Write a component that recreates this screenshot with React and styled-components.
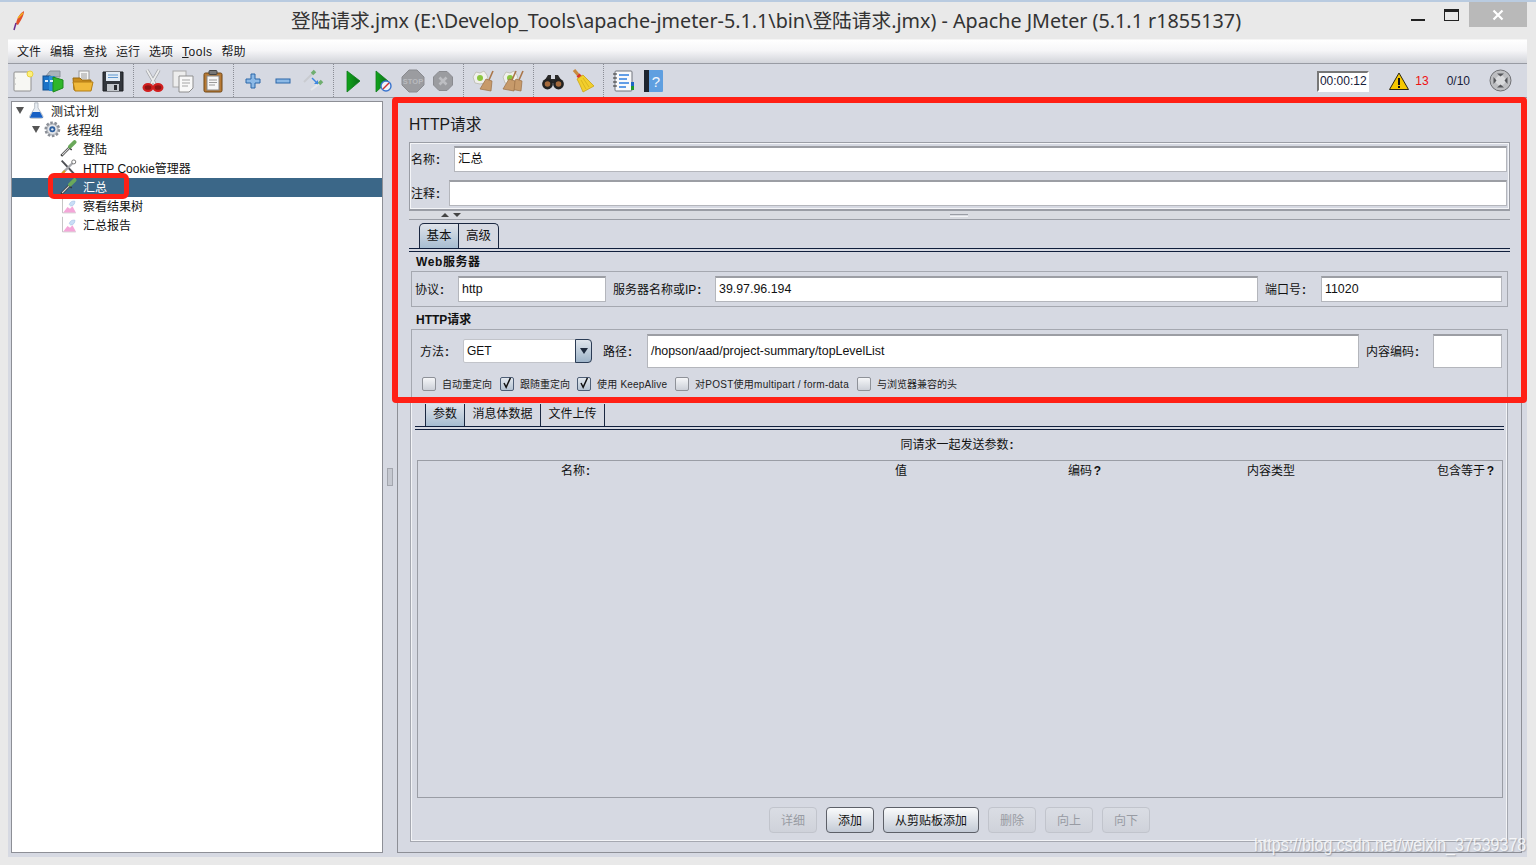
import React from "react";
import styled, { createGlobalStyle } from "styled-components";

const FONT = `"Liberation Sans", "Noto Sans CJK SC", sans-serif`;

const Global = createGlobalStyle`
  html, body { margin: 0; padding: 0; background: #e9e9e9; }
  body { font-family: ${FONT}; font-size: 12px; color: #111; overflow: hidden; }
  * { box-sizing: border-box; }
`;

const Window = styled.div`
  position: relative; width: 1536px; height: 865px; display: flex; flex-direction: column;
  background: #e9e9e9; border-top: 2px solid #b9cbe0; overflow: hidden;
`;
const TitleBar = styled.div`
  height: 37px; flex: none; display: flex; align-items: flex-start;
`;
const AppLogo = styled.div`
  width: 48px; padding: 8px 0 0 12px; flex: none;
`;
const TitleText = styled.div`
  flex: 1; text-align: center; font: 19.73px "Noto Sans", "Noto Sans CJK SC", sans-serif; color: #333;
  line-height: 37px; white-space: nowrap; padding-left: 82px;
`;
const WinControls = styled.div`
  width: 125px; flex: none; height: 25px; display: flex; align-items: flex-start; justify-content: flex-end; margin-right: 9px;
`;
const MinBtn = styled.div`
  width: 14px; height: 2px; background: #222; margin: 17px 19px 0 0;
`;
const MaxBtn = styled.div`
  width: 15px; height: 12px; border: 1px solid #222; border-top-width: 3px; margin: 7px 10px 0 0;
`;
const CloseBtn = styled.div`
  width: 58px; height: 25px; background: #b9b9b9; display: flex; align-items: center; justify-content: center;
`;

const Frame = styled.div`
  flex: none; height: 818px; margin: 0 9px 0 8px; display: flex; flex-direction: column;
`;
const MenuBar = styled.div`
  height: 25px; flex: none; display: flex; align-items: center; gap: 9px; padding-left: 9px;
  background: linear-gradient(#ffffff, #f6f6f8 45%, #d2d4da); border-bottom: 1px solid #989ba3; border-top: 1px solid #f5f5f5;
`;
const MenuItem = styled.span`
  font-size: 12px; color: #1a1a1a; line-height: 14px;
`;
const LatinMenuItem = styled(MenuItem)`
  letter-spacing: .5px;
  &::first-letter { text-decoration: underline; }
  display: inline-block;
`;
const ToolBar = styled.div`
  height: 34px; flex: none; display: flex; align-items: center; background: #d6d9e2; border-bottom: 1px solid #989ba3;
`;
const ToolBtn = styled.div`
  width: 30px; height: 30px; display: flex; align-items: center; justify-content: center; flex: none;
`;
const ToolSep = styled.div`
  width: 10px; height: 33px; flex: none; display: flex; justify-content: center;
  &::before { content: ""; border-left: 1px dotted #8a8d95; height: 100%; }
`;
const StatusArea = styled.div`
  margin-left: auto; display: flex; align-items: center; padding-right: 15px;
`;
const Timer = styled.div`
  width: 52px; height: 21px; background: #fff; border: 2px solid; border-color: #777 #fff #fff #777;
  font-size: 12px; line-height: 17px; text-align: center; white-space: nowrap; color: #16203a;
  margin: 1px 20px 0 0;
`;
const ErrCount = styled.span`
  color: #ee1111; font-size: 12px; margin: 0 18px 0 6px;
`;
const ThreadCount = styled.span`
  font-size: 12px; color: #16203a; margin-right: 19px;
`;

const Body = styled.div`
  flex: 1; min-height: 0; display: flex; background: #d6d9e2; padding: 3px 5px 4px 3px;
`;
const TreePane = styled.div`
  width: 372px; flex: none; background: #fff; border: 1px solid #8d8f96;
`;
const TreeRow = styled.div`
  height: 19px; display: flex; align-items: center; white-space: nowrap;
  padding-left: ${p => p.$pad}px;
  background: ${p => (p.$selected ? "#3b6788" : "transparent")};
  color: ${p => (p.$selected ? "#fff" : "#111")};
`;
const TreeLabel = styled.span`
  padding-bottom: 2px;
`;
const Expander = styled.div`
  width: 13px; flex: none; display: flex;
  &::before {
    content: ""; display: ${p => (p.$open ? "block" : "none")};
    border-left: 4px solid transparent; border-right: 4px solid transparent; border-top: 7px solid #555; margin: 0 0 2px 1px;
  }
`;
const TreeIcon = styled.div`
  width: 20px; height: 19px; flex: none; display: flex; align-items: center; justify-content: center; margin-right: 3px;
`;
const Divider = styled.div`
  width: 14px; flex: none; display: flex; align-items: center; justify-content: center;
  &::before { content: ""; width: 4px; height: 16px; border: 1px solid #a3a6ae; background: #c5c8d0; }
`;
const Panel = styled.div`
  flex: 1; min-width: 0; display: flex; flex-direction: column; border: 1px solid #8d8f96; padding: 0 11px;
`;
const PanelTitle = styled.div`
  height: 40px; flex: none; font-size: 15.7px; line-height: 46px; color: #1a1a1a;
`;
const NameBox = styled.div`
  height: 68px; flex: none; border: 1px solid #9a9da5; outline: 1px solid #f4f5f8; outline-offset: -2px;
  padding: 3px 2px 0 1px; display: flex; flex-direction: column; gap: 8px;
`;
const Row = styled.div`
  display: flex; align-items: center;
`;
const Label = styled.div`
  width: ${p => p.$w}px; flex: none; white-space: nowrap; font-size: 12px; color: #111;
  padding: 0 0 2px ${p => p.$pl || 0}px;
`;
const Colon = styled.span`
  display: inline-block; width: ${p => p.$w || 5}px; text-align: right; font-weight: 700;
`;
const Field = styled.div`
  height: ${p => p.$h}px; ${p => (p.$w ? `width:${p.$w}px; flex:none;` : "flex:1; min-width:0;")}
  background: #fff; border: 1px solid #b4b6bc; border-top: 2px solid #9c9ea4;
  font-size: 12.4px; color: #111; line-height: ${p => p.$h - 3}px; padding-left: 3px; white-space: nowrap;
`;
const Splitter = styled.div`
  height: 10px; flex: none; background: #d9dbe1;
  border-top: 1px solid #9a9da5; border-bottom: 1px solid #9a9da5;
  display: flex; align-items: center; padding-left: 32px; gap: 4px;
`;
const ArrowUp = styled.div`
  border-left: 4px solid transparent; border-right: 4px solid transparent; border-bottom: 4px solid #444;
`;
const ArrowDown = styled.div`
  border-left: 4px solid transparent; border-right: 4px solid transparent; border-top: 4px solid #444;
`;
const SplitGrip = styled.div`
  margin-left: 485px; width: 18px; height: 3px; border-top: 1px solid #9a9da5; border-bottom: 1px solid #f2f3f6;
`;
const TabStrip = styled.div`
  flex: none; display: flex; align-items: flex-end; height: ${p => p.$h}px;
  margin-top: ${p => p.$mt}px; padding-left: ${p => p.$pl}px;
`;
const Tab = styled.div`
  width: ${p => p.$w}px; height: 100%; border: 1px solid #1a2740; border-bottom: 0; border-left-width: ${p => (p.$first ? 1 : 0)}px;
  border-radius: ${p => (p.$first ? "5px 0 0 0" : "0 5px 0 0")};
  background: ${p => (p.$active ? "linear-gradient(#dfe3ea, #a7bdd1)" : "#d6d9e2")};
  text-align: center; font-size: 12.5px; line-height: 24px; color: #111; white-space: nowrap;
`;
const PlainTab = styled(Tab)`
  border-radius: 0; line-height: 21px; border-top: 0; font-size: 12px;
`;
const TabLine = styled.div`
  height: 4px; flex: none; border-top: 1px solid #101f3c; border-bottom: 1px solid #101f3c; margin: ${p => p.$m || 0};
`;
const SectionTitle = styled.div`
  height: ${p => p.$h}px; flex: none; font-size: 12px; font-weight: 700; padding-left: 7px; line-height: ${p => p.$lh}px; color: #111;
  letter-spacing: ${p => p.$ls || 0}px;
`;
const WebBox = styled.div`
  height: 36px; flex: none; margin: 0 2px; border: 1px solid #f2f3f6; outline: 1px solid #a5a8b0; outline-offset: -1px;
  padding: 0 5px 0 3px; display: flex; align-items: center;
`;
const HttpBox = styled.div`
  height: 71px; flex: none; margin: 0 2px; border: 1px solid #a5a8b0; border-bottom: 0; padding: 4px 5px 0 8px;
`;
const MethodSelect = styled.div`
  width: 129px; height: 24px; flex: none; display: flex; background: #fff; border: 1px solid #c2c4ca; border-radius: 2px 4px 4px 2px;
  font-size: 12px; line-height: 22px; padding-left: 3px;
  margin-right: 11px;
`;
const SelectText = styled.div`
  flex: 1;
`;
const SelectArrow = styled.div`
  width: 17px; margin: -1px -1px -1px 0; border: 1px solid #2b3c55; border-radius: 0 4px 4px 0;
  background: linear-gradient(#dfe5ec, #9eb4c9); display: flex; align-items: center; justify-content: center;
  &::before { content: ""; border-left: 4px solid transparent; border-right: 4px solid transparent; border-top: 6px solid #1e2a3d; }
`;
const CheckRow = styled.div`
  display: flex; align-items: center; margin-top: 9px; padding-left: 2px; height: 14px;
`;
const CheckBox = styled.div`
  width: 14px; height: 14px; flex: none; border-radius: 2px; border: 1px solid ${p => (p.$on ? "#4d5d75" : "#8e9198")};
  background: ${p => (p.$on ? "linear-gradient(#e3e8ee, #b5c3d2)" : "linear-gradient(#f5f6f8, #ccd0d8)")};
  display: flex; align-items: center; justify-content: center; margin-right: 6px; overflow: visible;
`;
const CheckText = styled.div`
  width: ${p => p.$w}px; flex: none; margin-right: 9px; padding-bottom: 2px; font-size: 10px; color: #222; white-space: nowrap;
  letter-spacing: ${p => p.$ls || 0}px;
`;
const ParamBox = styled.div`
  height: 442px; flex: none; margin: 0 2px 0 1px; border: 1px solid #a5a8b0; outline: 1px solid #f2f3f6; outline-offset: -2px;
  display: flex; flex-direction: column; padding-top: 3px;
`;
const ParamCaption = styled.div`
  height: 30px; flex: none; text-align: center; line-height: 30px; font-size: 12px; color: #111; padding-right: 4px;
`;
const ArgsTable = styled.div`
  height: 338px; flex: none; margin: 0 4px 0 6px; border: 1px solid #9a9da5; display: flex; align-items: flex-start; padding-top: 2px;
`;
const HeadCell = styled.div`
  margin-left: ${p => p.$ml}px; white-space: nowrap; font-size: 12px; line-height: 16px; color: #111;
`;
const ButtonRow = styled.div`
  flex: 1; display: flex; align-items: flex-start; justify-content: flex-start; gap: 9px; padding: 9px 0 0 358px;
`;
const Btn = styled.div`
  width: ${p => p.$w}px; height: 26px; border-radius: 4px; text-align: center; line-height: 26px; font-size: 12px; white-space: nowrap;
  border: 1px solid ${p => (p.$off ? "#c1c4cc" : "#5d6068")};
  color: ${p => (p.$off ? "#989ba3" : "#111")};
  background: ${p => (p.$off ? "linear-gradient(#dadde4, #cfd2da)" : "linear-gradient(#fafbfc, #c4cbd6)")};
`;
const RedBox = styled.div`
  position: absolute; left: ${p => p.$x}px; top: ${p => p.$y}px; width: ${p => p.$w}px; height: ${p => p.$h}px;
  border: ${p => p.$b}px solid #ff2015; border-radius: ${p => p.$r}px; pointer-events: none;
`;
const Watermark = styled.div`
  position: absolute; left: 1254px; top: 834px; font-size: 16px; white-space: nowrap; color: rgba(255,255,255,.82);
  text-shadow: 1px 1px 1px rgba(120,125,135,.5); transform: scaleY(1.15);
`;

const I = ({ s = 24, children }) => <svg width={s} height={s} viewBox="0 0 24 24">{children}</svg>;

const IcNew = () => <I><rect x="3" y="3" width="17" height="19" rx="1" fill="#f7f7f3" stroke="#8f8f8f" /><circle cx="19" cy="5" r="3" fill="#fdf07a" stroke="#e8d040" /><circle cx="4.5" cy="9" r=".5" fill="#aaa" /><circle cx="4.5" cy="15" r=".5" fill="#aaa" /></I>;
const IcTemplates = () => <I><path d="M5 7 L9 2 L19 2 L19 8Z" fill="#a9b3bb" stroke="#8b939b" /><rect x="2" y="7" width="7" height="14" fill="#1b73c7" stroke="#12508f" /><rect x="8" y="7" width="6" height="15" fill="#2d8fd6" /><path d="M12 8 L22 11 L22 19 L12 23Z" fill="#2fb62a" stroke="#1c8a1c" /><rect x="4" y="11" width="3" height="2" fill="#dfeffd" /><rect x="9" y="11" width="3" height="2" fill="#dfeffd" /></I>;
const IcOpen = () => <I><rect x="8" y="2" width="10" height="13" fill="#f6f6f6" stroke="#999" /><path d="M10 5h6M10 7h6M10 9h6" stroke="#999" /><path d="M2 9 h7 l2 2 h9 v10 H3Z" fill="#c98c1d" stroke="#9a6a10" /><path d="M2 13 H22 L20 22 H4Z" fill="#f0b93a" stroke="#b47f16" /></I>;
const IcSave = () => <I><path d="M2 3 H22 V22 H2Z" fill="#33373d" stroke="#1c1e22" /><rect x="5" y="3" width="14" height="9" fill="#e3ecf5" /><path d="M7 6h10M7 8.5h10" stroke="#5f98d0" /><rect x="6" y="15" width="12" height="7" fill="#c2c6cb" /><rect x="13" y="16" width="3" height="5" fill="#26282c" /></I>;
const IcCut = () => <I><path d="M6 1 L14 15 M18 1 L10 15" stroke="#a3a5aa" strokeWidth="3.4" fill="none" /><path d="M6 1 L14 15 M18 1 L10 15" stroke="#eceded" strokeWidth="1.8" fill="none" /><ellipse cx="7" cy="18.5" rx="4.4" ry="3.4" fill="#8f1414" stroke="#d21f1f" strokeWidth="2.2" /><ellipse cx="17" cy="18.5" rx="4.4" ry="3.4" fill="#8f1414" stroke="#d21f1f" strokeWidth="2.2" /></I>;
const IcCopy = () => <I><rect x="2" y="2" width="13" height="16" fill="#ededed" stroke="#a9a9a9" /><path d="M8 7 H22 V19 L18 23 H8Z" fill="#f8f8f8" stroke="#8e8e8e" /><path d="M11 11h8M11 14h8M11 17h6" stroke="#a4a4a4" /></I>;
const IcPaste = () => <I><rect x="3" y="4" width="18" height="19" rx="1.5" fill="#b87a34" stroke="#6f4615" /><rect x="6" y="7" width="12" height="14" fill="#f7f7f7" stroke="#888" /><rect x="8" y="1.5" width="8" height="4" rx="1" fill="#777" stroke="#444" /><path d="M8 11h8M8 13.5h8M8 16h6" stroke="#999" /></I>;
const IcPlus = () => <I><path d="M10 5 H14 V10 H19 V14 H14 V19 H10 V14 H5 V10 H10Z" fill="#8cb9e6" stroke="#2a66a8" /></I>;
const IcMinus = () => <I><rect x="5" y="10" width="14" height="4" fill="#8cb9e6" stroke="#2a66a8" /></I>;
const IcToggle = () => <I><path d="M3 13 L12 4" stroke="#c9cbd0" strokeWidth="2" /><path d="M11 5 L14 2" stroke="#6fae6f" strokeWidth="3.5" /><path d="M10 21 L19 14" stroke="#e6e7ea" strokeWidth="2" /><path d="M18 15 L21 12" stroke="#6fae6f" strokeWidth="3.5" /><path d="M11 9 L17 15" stroke="#3d86e0" strokeWidth="1.4" /><path d="M13 15 L17 15 L17 11Z" fill="#3d86e0" /></I>;
const IcRun = () => <I><defs><linearGradient id="gr" x1="0" y1="0" x2="1" y2="0"><stop offset="0" stopColor="#11a51b" /><stop offset="1" stopColor="#0b6d18" /></linearGradient></defs><path d="M6 2 L19 12 L6 23Z" fill="url(#gr)" stroke="#0d7a1a" strokeWidth=".8" /></I>;
const IcRunNoTimer = () => <I><path d="M5 2 L17 12 L5 23Z" fill="url(#gr)" stroke="#0d7a1a" strokeWidth=".8" /><circle cx="15" cy="17" r="5" fill="#eef3fb" stroke="#3a75cf" strokeWidth="1.4" /><path d="M12 20 L18 14" stroke="#d03030" strokeWidth="1.5" /></I>;
const IcStop = () => <I><path d="M8 1 H16 L23 8 V16 L16 23 H8 L1 16 V8Z" fill="#9b9ca0" stroke="#8a8b90" /><text x="12" y="14.5" textAnchor="middle" fontFamily="Liberation Sans" fontSize="7.5" fontWeight="700" fill="#b9babe">STOP</text></I>;
const IcShutdown = () => <I><path d="M8 2.5 H16 L21.5 8 V16 L16 21.5 H8 L2.5 16 V8Z" fill="#9b9ca0" stroke="#8a8b90" /><path d="M8.5 8.5 L15.5 15.5 M15.5 8.5 L8.5 15.5" stroke="#bdbec2" strokeWidth="2.6" /></I>;
const IcClear = ({ twin }) => <I>
  <path d="M2 8 L5 3 L9 4 L13 2 L16 6 L17 10 L14 14 L9 15 L4 14Z" fill="#f0f0ec" stroke="#c2c2ba" />
  <circle cx="9" cy="9" r="3" fill="#8cc63f" />
  <path d="M22 2 L18 11" stroke="#a9764a" strokeWidth="1.6" />
  <path d="M15 10 L21 12 L20 22 L9 20Z" fill="#c79a6a" stroke="#9a6f45" strokeWidth=".7" />
  {twin && <path d="M15 2 L11 11" stroke="#a9764a" strokeWidth="1.6" />}
  {twin && <path d="M8 10 L14 12 L13 22 L2 20Z" fill="#c79a6a" stroke="#9a6f45" strokeWidth=".7" />}
</I>;
const IcFind = () => <I><path d="M7 6 H10 V10 H14 V6 H17 L22 14 H2Z" fill="#2a2a2a" /><circle cx="6.5" cy="15" r="5.4" fill="#222" /><circle cx="17.5" cy="15" r="5.4" fill="#222" /><circle cx="6.5" cy="15" r="2.8" fill="#a56a3c" /><circle cx="17.5" cy="15" r="2.8" fill="#a56a3c" /></I>;
const IcBroom = () => <I><path d="M3 1 L9 8" stroke="#c98a3e" strokeWidth="3.2" /><path d="M7 6 L11 10" stroke="#d8322a" strokeWidth="4" /><path d="M6 10 L12 6 L23 17 L12 23 L9 16Z" fill="#f2cf2c" stroke="#c9a414" strokeWidth=".8" /><path d="M10 11 L15 20 M12 9 L18 18" stroke="#c9a414" strokeWidth=".6" /></I>;
const IcFunc = () => <I><rect x="4" y="2" width="17" height="20" rx="1" fill="#f8f9fb" stroke="#71757d" /><path d="M8 6h10M8 10h8M8 14h10M8 18h7" stroke="#2f7fe0" strokeWidth="1.4" /><path d="M2 5h4M2 9h4M2 13h4M2 17h4" stroke="#333" /><rect x="20" y="13" width="3" height="4" fill="#1c66c4" /><rect x="20" y="17" width="3" height="4" fill="#1c9a2c" /></I>;
const IcHelp = () => <I><rect x="4" y="1" width="18" height="22" rx="1" fill="#5f9fe0" /><rect x="3" y="1" width="5" height="22" fill="#1d2530" /><text x="15" y="18" textAnchor="middle" fontFamily="Liberation Sans" fontSize="15" fill="#f1f6fc">?</text></I>;
const IcWarn = () => <svg width="20" height="18" viewBox="0 0 20 18"><path d="M10 1 L19.5 17.5 H.5Z" fill="#f6c800" stroke="#2a2410" /><rect x="9" y="6" width="2" height="7" fill="#111" /><rect x="9" y="14" width="2" height="2" fill="#111" /></svg>;
const IcGlobe = () => <svg width="23" height="23" viewBox="0 0 23 23"><circle cx="11.5" cy="11.5" r="10.5" fill="#bdbec1" stroke="#6f7074" /><circle cx="11.5" cy="11.5" r="5" fill="#d9dadc" /><path d="M8 4.5h7l-3.5 3ZM8 18.5h7l-3.5-3ZM4.5 8v7l3-3.5ZM18.5 8v7l-3-3.5Z" fill="#55565a" /></svg>;
const IcFeather = () => <svg width="14" height="22" viewBox="0 0 14 22"><path d="M12 1 C8 3 5 8 4 14 L6 15 C9 10 12 6 12 1Z" fill="#e2502a" /><path d="M6 8 L9 5 L11 3" stroke="#f2b320" strokeWidth="1.4" fill="none" /><path d="M4 13 L2 20" stroke="#6b2d8f" strokeWidth="1.5" /></svg>;

const TFlask = () => <I s={20}><path d="M8 1 H12 V7 L18 17 Q18.5 19.5 16 19.5 H4 Q1.5 19.5 2 17 L8 7Z" fill="#e8edf3" stroke="#9aa2ac" strokeWidth=".8" /><path d="M5.5 12 H14.5 L18 19 H2Z" fill="#1760c4" /></I>;
const TGear = () => <I s={20}><circle cx="10" cy="10" r="8" fill="#cfd2d8" stroke="#8b8f97" strokeWidth="3" strokeDasharray="3 2" /><circle cx="10" cy="10" r="6.2" fill="#e4e6ea" stroke="#8e9299" strokeWidth=".6" /><circle cx="10" cy="10" r="3.6" fill="#2e5f9e" /><circle cx="10" cy="10" r="1.4" fill="#dfe8f4" /></I>;
const TPipette = () => <I s={20}><path d="M1.5 19 L11 9.5" stroke="#333" strokeWidth="3" /><path d="M2.5 18 L11 9.5" stroke="#d8d8d8" strokeWidth="1.4" /><path d="M10 8 L14 12" stroke="#333" strokeWidth="1.6" /><path d="M12 8 L17.5 2.5" stroke="#6aa85a" strokeWidth="4.6" strokeLinecap="round" /></I>;
const TTool = () => <I s={20}><path d="M2 2 L17 18" stroke="#4c4e53" strokeWidth="2.2" /><path d="M17 3 L3 17" stroke="#a6a8ad" strokeWidth="2.8" /><circle cx="16.5" cy="3.5" r="2.4" fill="#fff" stroke="#777" strokeWidth="1.2" /><path d="M1 19 L6 14" stroke="#d8a020" strokeWidth="2.6" /></I>;
const TGraph = () => <I s={20}><path d="M3 1 V19 H19" stroke="#b9b9b9" fill="none" /><path d="M4 18.5 L9 12 L12 14 L15 11 L19 18.5Z" fill="#f4a6d8" /><path d="M11 9 Q13 4 18 5 Q18 10 13 11Z" fill="#c9def6" stroke="#8fb2dc" strokeWidth=".5" /></I>;

const Check = () => <svg width="14" height="16" viewBox="0 0 14 16" style={{ marginTop: -3 }}><path d="M3.5 8 L6 13 L11 2" fill="none" stroke="#111" strokeWidth="1.7" /></svg>;

const Opt = ({ on, w, ls, children }) => <><CheckBox $on={on}>{on && <Check />}</CheckBox><CheckText $w={w} $ls={ls}>{children}</CheckText></>;
const LabelText = ({ children }) => <>{children}<Colon>:</Colon></>;

export default function App() {
  return (
    <Window>
      <Global />
      <TitleBar>
        <AppLogo><IcFeather /></AppLogo>
        <TitleText>登陆请求.jmx (E:\Develop_Tools\apache-jmeter-5.1.1\bin\登陆请求.jmx) - Apache JMeter (5.1.1 r1855137)</TitleText>
        <WinControls>
          <MinBtn /><MaxBtn />
          <CloseBtn><svg width="12" height="12" viewBox="0 0 12 12"><path d="M1.5 1.5 L10.5 10.5 M10.5 1.5 L1.5 10.5" stroke="#fff" strokeWidth="2.2" /></svg></CloseBtn>
        </WinControls>
      </TitleBar>
      <Frame>
        <MenuBar>
          <MenuItem>文件</MenuItem><MenuItem>编辑</MenuItem><MenuItem>查找</MenuItem><MenuItem>运行</MenuItem><MenuItem>选项</MenuItem>
          <LatinMenuItem>Tools</LatinMenuItem><MenuItem>帮助</MenuItem>
        </MenuBar>
        <ToolBar>
          <ToolBtn><IcNew /></ToolBtn><ToolBtn><IcTemplates /></ToolBtn><ToolBtn><IcOpen /></ToolBtn><ToolBtn><IcSave /></ToolBtn><ToolSep />
          <ToolBtn><IcCut /></ToolBtn><ToolBtn><IcCopy /></ToolBtn><ToolBtn><IcPaste /></ToolBtn><ToolSep />
          <ToolBtn><IcPlus /></ToolBtn><ToolBtn><IcMinus /></ToolBtn><ToolBtn><IcToggle /></ToolBtn><ToolSep />
          <ToolBtn><IcRun /></ToolBtn><ToolBtn><IcRunNoTimer /></ToolBtn><ToolBtn><IcStop /></ToolBtn><ToolBtn><IcShutdown /></ToolBtn><ToolSep />
          <ToolBtn><IcClear /></ToolBtn><ToolBtn><IcClear twin /></ToolBtn><ToolSep />
          <ToolBtn><IcFind /></ToolBtn><ToolBtn><IcBroom /></ToolBtn><ToolSep />
          <ToolBtn><IcFunc /></ToolBtn><ToolBtn><IcHelp /></ToolBtn>
          <StatusArea>
            <Timer>00:00:12</Timer>
            <IcWarn />
            <ErrCount>13</ErrCount>
            <ThreadCount>0/10</ThreadCount>
            <IcGlobe />
          </StatusArea>
        </ToolBar>
        <Body>
          <TreePane>
            <TreeRow $pad={3}><Expander $open /><TreeIcon><TFlask /></TreeIcon><TreeLabel>测试计划</TreeLabel></TreeRow>
            <TreeRow $pad={19}><Expander $open /><TreeIcon><TGear /></TreeIcon><TreeLabel>线程组</TreeLabel></TreeRow>
            <TreeRow $pad={35}><Expander /><TreeIcon><TPipette /></TreeIcon><TreeLabel>登陆</TreeLabel></TreeRow>
            <TreeRow $pad={35}><Expander /><TreeIcon><TTool /></TreeIcon><TreeLabel>HTTP Cookie管理器</TreeLabel></TreeRow>
            <TreeRow $pad={35} $selected><Expander /><TreeIcon><TPipette /></TreeIcon><TreeLabel>汇总</TreeLabel></TreeRow>
            <TreeRow $pad={35}><Expander /><TreeIcon><TGraph /></TreeIcon><TreeLabel>察看结果树</TreeLabel></TreeRow>
            <TreeRow $pad={35}><Expander /><TreeIcon><TGraph /></TreeIcon><TreeLabel>汇总报告</TreeLabel></TreeRow>
          </TreePane>
          <Divider />
          <Panel>
            <PanelTitle>HTTP请求</PanelTitle>
            <NameBox>
              <Row><Label $w={43}><LabelText>名称</LabelText></Label><Field $h={26}>汇总</Field></Row>
              <Row><Label $w={38}><LabelText>注释</LabelText></Label><Field $h={26} /></Row>
            </NameBox>
            <Splitter><ArrowUp /><ArrowDown /><SplitGrip /></Splitter>
            <TabStrip $h={25} $mt={3} $pl={10}>
              <Tab $w={40} $active $first>基本</Tab><Tab $w={40}>高级</Tab>
            </TabStrip>
            <TabLine />
            <SectionTitle $h={19} $lh={20} $ls={.6}>Web服务器</SectionTitle>
            <WebBox>
              <Label $w={43}><LabelText>协议</LabelText></Label><Field $h={26} $w={148}>http</Field>
              <Label $w={109} $pl={7}><LabelText>服务器名称或IP</LabelText></Label><Field $h={26}>39.97.96.194</Field>
              <Label $w={63} $pl={7}><LabelText>端口号</LabelText></Label><Field $h={26} $w={181}>11020</Field>
            </WebBox>
            <SectionTitle $h={22} $lh={26}>HTTP请求</SectionTitle>
            <HttpBox>
              <Row>
                <Label $w={43}><LabelText>方法</LabelText></Label>
                <MethodSelect><SelectText>GET</SelectText><SelectArrow /></MethodSelect>
                <Label $w={44}><LabelText>路径</LabelText></Label><Field $h={34}>/hopson/aad/project-summary/topLevelList</Field>
                <Label $w={74} $pl={7}><LabelText>内容编码</LabelText></Label><Field $h={34} $w={69} />
              </Row>
              <CheckRow>
                <Opt w={49}>自动重定向</Opt>
                <Opt on w={48}>跟随重定向</Opt>
                <Opt on w={69} ls={.2}>使用 KeepAlive</Opt>
                <Opt w={153} ls={.26}>对POST使用multipart / form-data</Opt>
                <Opt w={79}>与浏览器兼容的头</Opt>
              </CheckRow>
            </HttpBox>
            <ParamBox>
              <TabStrip $h={22} $mt={0} $pl={14}>
                <PlainTab $w={40} $active $first>参数</PlainTab><PlainTab $w={76}>消息体数据</PlainTab><PlainTab $w={64}>文件上传</PlainTab>
              </TabStrip>
              <TabLine $m="0 3px 0 4px" />
              <ParamCaption><LabelText>同请求一起发送参数</LabelText></ParamCaption>
              <ArgsTable>
                <HeadCell $ml={143}><LabelText>名称</LabelText></HeadCell>
                <HeadCell $ml={305}>值</HeadCell>
                <HeadCell $ml={161}>编码<Colon $w={9}>?</Colon></HeadCell>
                <HeadCell $ml={146}>内容类型</HeadCell>
                <HeadCell $ml={142}>包含等于<Colon $w={9}>?</Colon></HeadCell>
              </ArgsTable>
              <ButtonRow>
                <Btn $w={48} $off>详细</Btn><Btn $w={48}>添加</Btn><Btn $w={96}>从剪贴板添加</Btn>
                <Btn $w={48} $off>删除</Btn><Btn $w={48} $off>向上</Btn><Btn $w={48} $off>向下</Btn>
              </ButtonRow>
            </ParamBox>
          </Panel>
        </Body>
      </Frame>
      <RedBox $x={48} $y={171} $w={81} $h={26} $b={5} $r={6} />
      <RedBox $x={392} $y={95} $w={1135} $h={306} $b={6} $r={4} />
      <Watermark>https://blog.csdn.net/weixin_37539378</Watermark>
    </Window>
  );
}
